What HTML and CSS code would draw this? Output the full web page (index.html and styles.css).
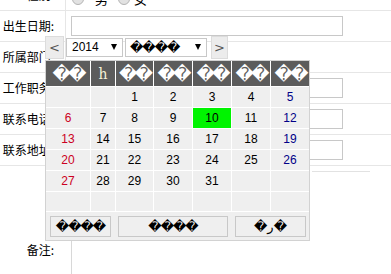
FILE: index.html
```html
<!DOCTYPE html>
<html>
<head>
<meta charset="utf-8">
<link rel="stylesheet" href="styles.css">
</head>
<body>
<div class="form">
  <div class="row">
    <div class="label">性别:</div>
    <div class="field field-radio">
      <span class="radio"></span><span class="opt">男</span>
      <span class="radio radio2"></span><span class="opt opt2">女</span>
    </div>
  </div>
  <div class="row">
    <div class="label">出生日期:</div>
    <div class="field"><input class="text" type="text"></div>
  </div>
  <div class="row">
    <div class="label">所属部门:</div>
    <div class="field"></div>
  </div>
  <div class="row">
    <div class="label">工作职务:</div>
    <div class="field"><input class="text" type="text"></div>
  </div>
  <div class="row">
    <div class="label">联系电话:</div>
    <div class="field"><input class="text" type="text"></div>
  </div>
  <div class="row">
    <div class="label">联系地址:</div>
    <div class="field"><input class="text" type="text"></div>
  </div>
  <div class="stub"></div>
  <div class="row-note">
    <div class="label-note">备注:</div>
    <div class="field-note"></div>
  </div>
</div>

<div class="cal">
  <div class="cal-nav">
    <button class="nav-btn prev">&lt;</button>
    <span class="sel sel-year"><span>2014</span><i class="arrow"></i></span>
    <span class="sel sel-month"><span class="bad">����</span><i class="arrow"></i></span>
    <button class="nav-btn next">&gt;</button>
  </div>
  <div class="cal-grid">
    <div class="hd">��</div><div class="hd hd-mon">һ</div><div class="hd">��</div><div class="hd">��</div><div class="hd">��</div><div class="hd">��</div><div class="hd">��</div>

    <div class="d"></div><div class="d"></div><div class="d">1</div><div class="d">2</div><div class="d">3</div><div class="d">4</div><div class="d sat">5</div>
    <div class="d sun">6</div><div class="d">7</div><div class="d">8</div><div class="d">9</div><div class="d today">10</div><div class="d">11</div><div class="d sat">12</div>
    <div class="d sun">13</div><div class="d">14</div><div class="d">15</div><div class="d">16</div><div class="d">17</div><div class="d">18</div><div class="d sat">19</div>
    <div class="d sun">20</div><div class="d">21</div><div class="d">22</div><div class="d">23</div><div class="d">24</div><div class="d">25</div><div class="d sat">26</div>
    <div class="d sun">27</div><div class="d">28</div><div class="d">29</div><div class="d">30</div><div class="d">31</div><div class="d"></div><div class="d"></div>
    <div class="d"></div><div class="d"></div><div class="d"></div><div class="d"></div><div class="d"></div><div class="d"></div><div class="d"></div>

    <div class="foot">
      <button class="cal-btn b1">����</button>
      <button class="cal-btn b2">����</button>
      <button class="cal-btn b3">�ر�</button>
    </div>
  </div>
</div>
</body>
</html>
```
FILE: styles.css
```css
html, body {
  margin: 0;
  padding: 0;
  background: #fff;
}
body {
  font-family: "Noto Sans CJK SC", sans-serif;
  font-size: 12px;
  color: #000;
  overflow: hidden;
  width: 391px;
  height: 274px;
}

.form {
  margin-top: -20px;
}
.row {
  display: flex;
  height: 30px;
  border-bottom: 1px solid #e6e6e6;
}
.label {
  width: 66px;
  box-sizing: border-box;
  border-right: 1px solid #e6e6e6;
  text-align: right;
  padding-right: 11px;
  line-height: 30px;
  white-space: nowrap;
}
.field {
  display: flex;
  align-items: center;
  padding-left: 5px;
}
.field-radio {
  padding-top: 7px;
  align-items: center;
}
.radio {
  width: 12px;
  height: 12px;
  box-sizing: border-box;
  border-radius: 50%;
  border: 1px solid #b4b4b4;
  background: #e2e2e2;
  margin-left: 1px;
}
.opt {
  margin-left: 11px;
  font-size: 13px;
}
.radio2 {
  margin-left: 10px;
}
.opt2 {
  margin-left: 4px;
}
.text {
  width: 272px;
  height: 20px;
  box-sizing: border-box;
  border: 1px solid #c8c8c8;
  margin: 0;
  padding: 0;
}
.stub {
  margin: 5px 0 0 312px;
  width: 58px;
  border-top: 1px solid #e2e2e2;
}
.row-note {
  display: flex;
  margin-top: 68px;
  height: 40px;
}
.label-note {
  width: 72px;
  box-sizing: border-box;
  border-right: 1px solid #d8d8d8;
  text-align: right;
  padding: 2px 17px 0 0;
  line-height: 16px;
}

/* calendar popup */
.cal {
  position: absolute;
  left: 45px;
  top: 34px;
  width: 265px;
  font-family: "Liberation Sans", "DejaVu Sans", sans-serif;
  font-size: 12px;
}
.cal-nav {
  display: flex;
  align-items: center;
  height: 26px;
}
.nav-btn {
  width: 19px;
  height: 23px;
  box-sizing: border-box;
  border: 1px solid #dcdcdc;
  background: #ececec;
  color: #555;
  font: 13px "DejaVu Sans", sans-serif;
  padding: 0;
  margin: 0;
}
.nav-btn.next {
  width: 17px;
  margin-left: 4px;
}
.sel {
  display: flex;
  align-items: center;
  height: 19px;
  box-sizing: border-box;
  border: 1px solid #c8c8c8;
  background: #fff;
  margin-left: 2px;
  color: #000;
}
.sel-year {
  width: 57px;
  padding-left: 5px;
}
.sel-year .arrow {
  margin-left: 12px;
}
.sel-month {
  width: 82px;
  padding-left: 4px;
}
.sel-month .arrow {
  margin-left: auto;
  margin-right: 5px;
}
.bad {
  font-family: "DejaVu Sans", sans-serif;
  font-size: 13px;
  letter-spacing: -1px;
}
.arrow {
  width: 0;
  height: 0;
  border-left: 3px solid transparent;
  border-right: 3px solid transparent;
  border-top: 6px solid #000;
}

.cal-grid {
  display: grid;
  grid-template-columns: 44px 24px 37px 38px 38px 38px 38px;
  grid-template-rows: 25px repeat(5, 20px) 19px 28px;
  gap: 1px;
  background: #fff;
  border: 1px solid #d2d2d2;
}
.hd {
  background: #5c5c5c;
  color: #fff;
  font-family: "DejaVu Sans", sans-serif;
  font-size: 18px;
  letter-spacing: -3px;
  display: flex;
  align-items: center;
  justify-content: center;
  white-space: nowrap;
}
.hd-mon {
  font-family: "DejaVu Serif", "Liberation Serif", serif;
  font-size: 14px;
  color: #f6f1d6;
  font-weight: normal;
  letter-spacing: 0;
}
.d {
  background: #efefef;
  text-align: center;
  line-height: 20px;
  color: #000;
}
.sun { color: #cc0022; }
.sat { color: #000088; }
.today { background: #00f400; }

.foot {
  grid-column: 1 / -1;
  background: #efefef;
  display: flex;
  align-items: flex-start;
  gap: 7px;
  padding: 4px 0 0 4px;
}
.cal-btn {
  height: 21px;
  box-sizing: border-box;
  border: 1px solid #c8c8c8;
  background: #efefef;
  margin: 0;
  padding: 0;
  font-family: "DejaVu Sans", sans-serif;
  font-size: 13px;
  letter-spacing: -1px;
  color: #000;
}
.b1 { width: 61px; }
.b2 { width: 110px; }
.b3 { width: 71px; }
```
